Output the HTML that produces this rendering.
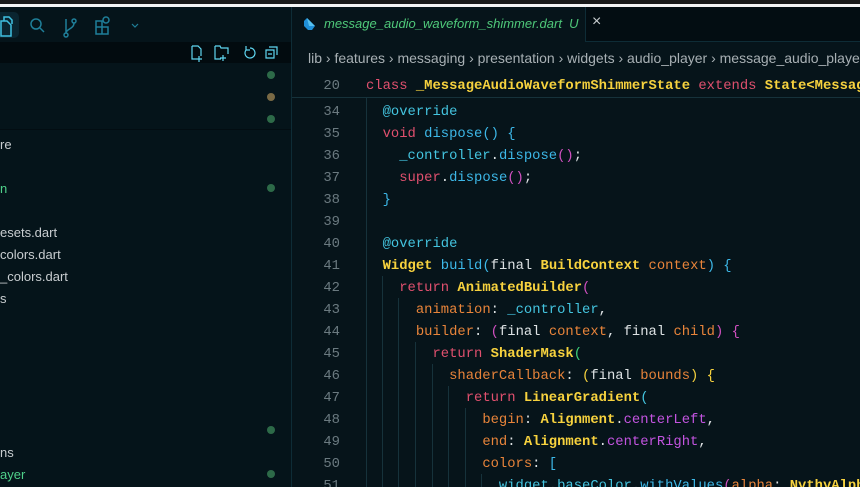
<!DOCTYPE html><html><head><style>
*{margin:0;padding:0;box-sizing:border-box}
html,body{width:860px;height:487px;overflow:hidden}
body{background:#06141a;position:relative;font-family:"Liberation Sans",sans-serif}
#clip{position:absolute;left:0;top:0;width:860px;height:487px;overflow:hidden}
.a{position:absolute}
.top{left:0;top:0;width:860px;height:4px;background:#1a1a1a}
.wl{left:0;top:4px;width:860px;height:3px;background:#f4f4f4}
.side{left:0;top:7px;width:291px;height:480px;background:#05141a}
.vsep{left:291px;top:7px;width:1px;height:480px;background:#0e2c36}
.tool{left:0;top:42px;width:291px;height:21px;background:#020b0f}
.dot{width:8px;height:8px;border-radius:50%;left:267px}
.ft{font-size:13px;color:#c8cdd0;left:0}
.tabbar{left:292px;top:7px;width:568px;height:35px;background:#030d12}
.tab{left:292px;top:7px;width:294px;height:35px;background:#06141a;border-right:1px solid #0e2c36}
.tabline{left:586px;top:41px;width:274px;height:1px;background:#0e2c36}
.code{font-family:"Liberation Mono",monospace;font-size:13.85px;white-space:pre;line-height:22px}
.ln{color:#6b7a80;left:292px;width:48px;text-align:right}
.k{color:#e0506e}.y{color:#f7d23e;font-weight:bold}.b{color:#3db8e8}.c{color:#44c5e0}.o{color:#e8843a}.p{color:#c354e0}.w{color:#dde2e4}.g{color:#3fd07a}.yb{color:#f7d23e}.m{color:#d050c0}
.gd{width:1px;background:#16323b}
</style></head><body><div id="clip">
<div class="a top"></div><div class="a wl"></div>
<div class="a side"></div>
<div class="a tool"></div>
<div class="a vsep"></div>
<div class="a" style="left:0;top:12px;width:19px;height:26px;background:#0a2530;border-radius:0 5px 5px 0"></div>
<svg class="a" style="left:0;top:7px" width="150" height="35" viewBox="0 0 150 35" fill="none" stroke-width="1.5">
<path d="M1 14h6l4 4v11H1z" stroke="#3fc0e0"/><path d="M4 14v-4h5l3 3v4" stroke="#3fc0e0"/>
<circle cx="36" cy="17" r="5" stroke="#1f7f99"/><path d="M40 21l4 4" stroke="#1f7f99"/>
<circle cx="66" cy="28" r="2" stroke="#1f7f99"/><circle cx="74" cy="14" r="2" stroke="#1f7f99"/><path d="M66 12v14M74 16c0 6-8 6-8 10" stroke="#1f7f99"/>
<path d="M96 14h6v6h-6zM96 20h6v7h-6zM102 20h6v7h-6z" stroke="#1f7f99"/><circle cx="106" cy="13" r="3" stroke="#1f7f99"/>
<path d="M132 17l3 3 3-3" stroke="#1f7f99" stroke-width="1.2"/>
</svg>
<svg class="a" style="left:190px;top:44px" width="90" height="18" viewBox="0 0 90 18" fill="none" stroke="#5fd6f0" stroke-width="1.2">
<path d="M2 2h6l3 3v7M2 2v13h7M9 12v6M6 15h6"/>
<path d="M25 2h5l1 2h7v6M25 2v13h6M33 11v6M30 14h6"/>
<path d="M60 4a5 5 0 1 1-4 2M56 2v4h4"/>
<path d="M76 6h8v8h-8zM79 3h8v8M78 10h4"/>
</svg>
<div class="a dot" style="top:71px;background:#2d6a48"></div>
<div class="a dot" style="top:93px;background:#7a6a45"></div>
<div class="a dot" style="top:115px;background:#2d6a48"></div>
<div class="a" style="left:0;top:129px;width:291px;height:1px;background:#030d12"></div>
<div class="a ft" style="top:137px">re</div>
<div class="a ft" style="top:181px;color:#4fd08a">n</div>
<div class="a dot" style="top:184px;background:#2d6a48"></div>
<div class="a ft" style="top:225px">esets.dart</div>
<div class="a ft" style="top:247px">colors.dart</div>
<div class="a ft" style="top:269px">_colors.dart</div>
<div class="a ft" style="top:291px">s</div>
<div class="a dot" style="top:426px;background:#2d6a48"></div>
<div class="a ft" style="top:445px">ns</div>
<div class="a ft" style="top:467px;color:#4fd08a">ayer</div>
<div class="a dot" style="top:470px;background:#2d6a48"></div>
<div class="a tabbar"></div><div class="a tab"></div><div class="a tabline"></div>
<svg class="a" style="left:303px;top:17px" width="14" height="14" viewBox="0 0 14 14"><path d="M4 1l8 8-3 4H5L1 9V4z" fill="#1f8fd8"/><path d="M4 1l8 8H6z" fill="#55c0f0"/></svg>
<div class="a" style="left:324px;top:16px;font-size:13px;font-style:italic;color:#4fc97a;white-space:nowrap">message_audio_waveform_shimmer.dart&nbsp; U</div>
<div class="a" style="left:592px;top:13px;font-size:16px;color:#c8cdd0">×</div>
<div class="a" style="left:308px;top:50px;font-size:14px;color:#a8b0b4;white-space:nowrap">lib › features › messaging › presentation › widgets › audio_player › message_audio_player</div>
<div class="a" style="left:292px;top:97px;width:568px;height:1px;background:#16323b"></div>
<div class="a code ln" style="top:75px">20</div>
<div class="a code" style="left:366px;top:75px"><span class="k">class </span><span class="y">_MessageAudioWaveformShimmerState</span><span class="k"> extends </span><span class="y">State&lt;MessageAudioWaveformShimmer&gt;</span></div>
<div class="a gd" style="left:366px;top:98px;height:389px"></div>
<div class="a gd" style="left:382px;top:276px;height:211px"></div>
<div class="a gd" style="left:398px;top:298px;height:189px"></div>
<div class="a gd" style="left:415px;top:342px;height:145px"></div>
<div class="a gd" style="left:432px;top:364px;height:123px"></div>
<div class="a gd" style="left:448px;top:386px;height:101px"></div>
<div class="a gd" style="left:465px;top:408px;height:79px"></div>
<div class="a gd" style="left:481px;top:474px;height:13px"></div>
<div class="a code ln" style="top:101px">34
35
36
37
38
39
40
41
42
43
44
45
46
47
48
49
50
51</div>
<div class="a code w" style="left:366px;top:101px">  <span class="c">@override</span>
  <span class="k">void</span> <span class="b">dispose</span><span class="b">() {</span>
    <span class="c">_controller</span>.<span class="b">dispose</span><span class="m">()</span>;
    <span class="k">super</span>.<span class="b">dispose</span><span class="m">()</span>;
  <span class="b">}</span>

  <span class="c">@override</span>
  <span class="y">Widget</span> <span class="b">build</span><span class="b">(</span>final <span class="y">BuildContext</span> <span class="o">context</span><span class="b">) {</span>
    <span class="k">return</span> <span class="y">AnimatedBuilder</span><span class="m">(</span>
      <span class="o">animation</span>: <span class="c">_controller</span>,
      <span class="o">builder</span>: <span class="m">(</span>final <span class="o">context</span>, final <span class="o">child</span><span class="m">) {</span>
        <span class="k">return</span> <span class="y">ShaderMask</span><span class="g">(</span>
          <span class="o">shaderCallback</span>: <span class="yb">(</span>final <span class="o">bounds</span><span class="yb">) {</span>
            <span class="k">return</span> <span class="y">LinearGradient</span><span class="c">(</span>
              <span class="o">begin</span>: <span class="y">Alignment</span>.<span class="p">centerLeft</span>,
              <span class="o">end</span>: <span class="y">Alignment</span>.<span class="p">centerRight</span>,
              <span class="o">colors</span>: <span class="b">[</span>
                <span class="c">widget</span>.<span class="c">baseColor</span>.<span class="b">withValues</span><span class="m">(</span><span class="o">alpha</span>: <span class="y">NythyAlpha</span></div>
</div></body></html>
